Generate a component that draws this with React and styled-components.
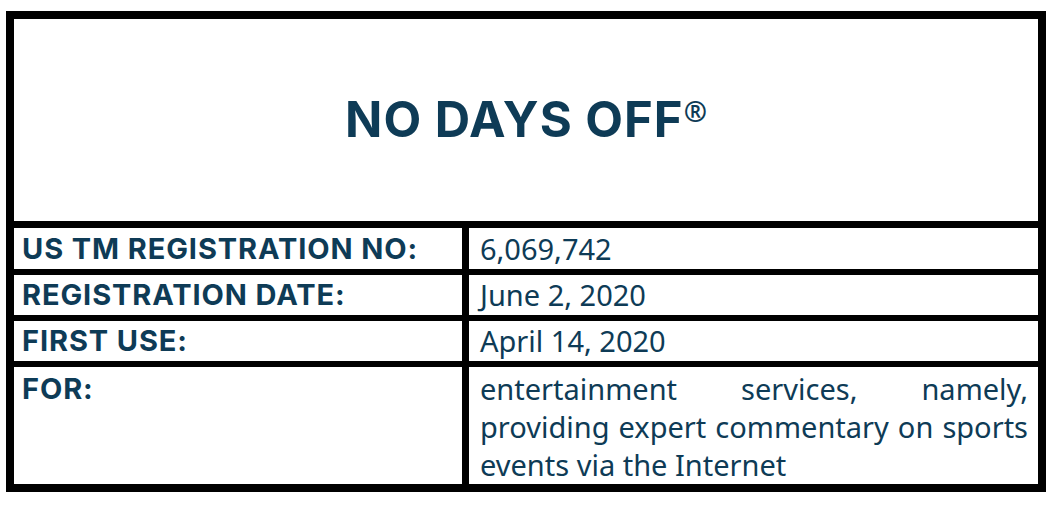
import React from "react";
import styled, { createGlobalStyle } from "styled-components";

const Global = createGlobalStyle`
  html, body { margin: 0; padding: 0; background: #ffffff; }
  body { font-family: "Noto Sans", "Open Sans", sans-serif; }
`;

const INK = "#0e3b56";

const Frame = styled.div`
  box-sizing: border-box;
  width: 1040px;
  height: 481px;
  margin: 11px 0 0 6px;
  border: 8px solid #000;
  background: #000;
  display: flex;
  flex-direction: column;
`;

const Header = styled.div`
  height: 203px;
  background: #fff;
  margin-bottom: 7px;
  display: flex;
  align-items: center;
  justify-content: center;
`;

const Title = styled.h1`
  margin: 0;
  font-family: Inter, "Open Sans", sans-serif;
  font-size: 49px;
  font-weight: 700;
  color: ${INK};
  letter-spacing: 1px;
  line-height: 60px;
`;

const Mark = styled.span`
  font-family: "Noto Sans", sans-serif;
  font-size: 28px;
  vertical-align: 15px;
  line-height: 0;
  letter-spacing: 0;
`;

const Grid = styled.div`
  flex: 1;
  display: grid;
  grid-template-columns: 448px 1fr;
  grid-template-rows: 41px 40px 40px 1fr;
  column-gap: 7px;
  row-gap: 6px;
`;

const Cell = styled.div`
  background: #fff;
  color: ${INK};
  font-size: 29px;
  line-height: 38px;
  display: flex;
  align-items: ${(p) => (p.$top ? "flex-start" : "center")};
  padding: ${(p) => (p.$top ? "3px" : "0")} 10px 0;
`;

const Label = styled(Cell)`
  font-family: Inter, "Open Sans", sans-serif;
  font-size: 29px;
  font-weight: 700;
  letter-spacing: 0.9px;
  padding-left: 8px;
`;

const Value = styled(Cell)`
  font-weight: 400;
  padding-left: 11px;
`;

const Justified = styled.p`
  margin: 0;
  text-align: justify;
  width: 100%;
`;

const rows = [
  ["US TM REGISTRATION NO:", "6,069,742"],
  ["REGISTRATION DATE:", "June 2, 2020"],
  ["FIRST USE:", "April 14, 2020"],
];

export default function App() {
  return (
    <>
      <Global />
      <Frame>
        <Header>
          <Title>
            NO DAYS OFF<Mark>®</Mark>
          </Title>
        </Header>
        <Grid>
          {rows.map(([l, v]) => (
            <React.Fragment key={l}>
              <Label>{l}</Label>
              <Value>{v}</Value>
            </React.Fragment>
          ))}
          <Label $top>FOR:</Label>
          <Value $top>
            <Justified>
              entertainment services, namely, providing expert commentary on
              sports events via the Internet
            </Justified>
          </Value>
        </Grid>
      </Frame>
    </>
  );
}
